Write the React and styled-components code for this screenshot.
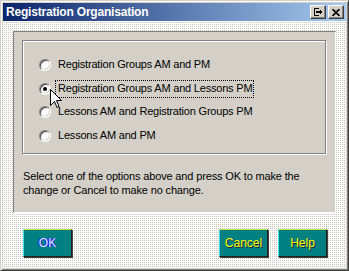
import styled, { createGlobalStyle } from 'styled-components';

const GlobalStyle = createGlobalStyle`
  html, body {
    margin: 0;
    padding: 0;
    background: #d4d0c8;
  }
  body {
    font-family: "Liberation Sans", Arial, sans-serif;
  }
`;

const Window = styled.div`
  position: relative;
  box-sizing: border-box;
  width: 349px;
  height: 271px;
  display: flex;
  flex-direction: column;
  padding: 2px;
  background: #d4d0c8;
  border: 1px solid;
  border-color: #d4d0c8 #404040 #404040 #d4d0c8;
  box-shadow: inset 1px 1px #fff, inset -1px -1px #808080;
`;

const TitleBar = styled.div`
  height: 18px;
  display: flex;
  align-items: center;
  padding: 0 2px 0 3px;
  background: linear-gradient(to right, #0a246a, #a6caf0);
`;

const Title = styled.span`
  flex: 1;
  color: #fff;
  font-weight: bold;
  font-size: 12px;
  letter-spacing: -0.2px;
`;

const CaptionButton = styled.button`
  box-sizing: border-box;
  width: 16px;
  height: 14px;
  padding: 0;
  margin-left: ${(p) => (p.$gap ? '2px' : '0')};
  display: flex;
  align-items: center;
  justify-content: center;
  background: #d4d0c8;
  border: 1px solid;
  border-color: #fff #404040 #404040 #fff;
  box-shadow: inset -1px -1px #808080;
`;

const Client = styled.div`
  flex: 1;
  display: flex;
  flex-direction: column;
  padding: 10px;
  background-color: #c8c4bc;
  background-image: linear-gradient(#fff 1px, transparent 1px),
    linear-gradient(90deg, #fff 1px, transparent 1px);
  background-size: 2px 2px;
`;

const Panel = styled.div`
  box-sizing: border-box;
  height: 182px;
  padding: 8px 8px 0 8px;
  background: #d4d0c8;
  border: 1px solid;
  border-color: #808080 #fff #fff #808080;
`;

const GroupBox = styled.div`
  position: relative;
  box-sizing: border-box;
  height: 115px;
  padding: 12px 0 0 16px;
  border: 1px solid #808080;
  border-right-color: #fff;
  border-bottom-color: #fff;
  box-shadow: inset 1px 1px #fff;
  &::after {
    content: '';
    position: absolute;
    inset: 0;
    border-right: 1px solid #808080;
    border-bottom: 1px solid #808080;
    pointer-events: none;
  }
`;

const Option = styled.label`
  height: 23.7px;
  display: flex;
  align-items: center;
  font-size: 11px;
  letter-spacing: -0.2px;
  color: #000;
`;

const Radio = styled.span`
  box-sizing: border-box;
  width: 12px;
  height: 12px;
  flex: none;
  border-radius: 50%;
  border: 1px solid;
  border-color: #808080 #fff #fff #808080;
  box-shadow: inset 1px 1px #404040, inset -1px -1px #d4d0c8;
  background: #fff;
  display: flex;
  align-items: center;
  justify-content: center;
  &::before {
    content: '';
    width: 4px;
    height: 4px;
    border-radius: 50%;
    background: ${(p) => (p.$checked ? '#000' : 'transparent')};
  }
`;

const OptionText = styled.span`
  margin-left: 4px;
  padding: 1px 1px 2px 2px;
  border: 1px dotted ${(p) => (p.$focus ? '#000' : 'transparent')};
  line-height: 13px;
`;

const Hint = styled.p`
  margin: 14px 0 0 1px;
  font-size: 11px;
  letter-spacing: -0.15px;
  line-height: 14px;
  color: #000;
`;

const ButtonRow = styled.div`
  display: flex;
  justify-content: space-between;
  margin-top: 16px;
  padding: 0 9px 0 10px;
`;

const RightButtons = styled.div`
  display: flex;
  gap: 10px;
`;

const TealButton = styled.button`
  box-sizing: border-box;
  width: 49px;
  height: 28px;
  padding: 0;
  background: #008080;
  border: 1px solid;
  border-color: #c8e040 #202020 #202020 #40e0f0;
  box-shadow: 1px 1px #404040;
  font-family: "Liberation Sans", Arial, sans-serif;
  font-size: 12px;
  color: ${(p) => (p.$blue ? '#dfe8ff' : '#ffff00')};
  text-shadow: ${(p) => (p.$blue ? '1px 0 #2020ff, -1px 0 #2020ff' : '1px 1px #202040')};
`;

const Cursor = styled.svg`
  position: absolute;
  left: 49px;
  top: 88px;
  pointer-events: none;
`;

const options = [
  'Registration Groups AM and PM',
  'Registration Groups AM and Lessons PM',
  'Lessons AM and Registration Groups PM',
  'Lessons AM and PM',
];

export default function App() {
  return (
    <Window>
      <GlobalStyle />
      <TitleBar>
        <Title>Registration Organisation</Title>
        <CaptionButton>
          <svg width="9" height="8" viewBox="0 0 9 8" shapeRendering="crispEdges">
            <path d="M5 0.5H0.5V7.5H5" fill="none" stroke="#000" />
            <path d="M2 3.5H6 M2 4.5H6" stroke="#000" />
            <path d="M6 1.5L9 4L6 6.5Z" fill="#000" />
          </svg>
        </CaptionButton>
        <CaptionButton $gap>
          <svg width="8" height="7" viewBox="0 0 8 7">
            <path d="M0.5 0L7.5 7 M7.5 0L0.5 7" stroke="#000" strokeWidth="1.6" />
          </svg>
        </CaptionButton>
      </TitleBar>
      <Client>
        <Panel>
          <GroupBox>
            {options.map((o, i) => (
              <Option key={o}>
                <Radio $checked={i === 1} />
                <OptionText $focus={i === 1}>{o}</OptionText>
              </Option>
            ))}
          </GroupBox>
          <Hint>
            Select one of the options above and press OK to make the
            <br />
            change or Cancel to make no change.
          </Hint>
        </Panel>
        <ButtonRow>
          <TealButton $blue>OK</TealButton>
          <RightButtons>
            <TealButton>Cancel</TealButton>
            <TealButton>Help</TealButton>
          </RightButtons>
        </ButtonRow>
      </Client>
      <Cursor width="12" height="20" viewBox="0 0 12 20">
        <path
          d="M0.5 0.5V16.5L4.5 12.5L7 18.5L9 17.5L6.5 11.5H11.5Z"
          fill="#fff"
          stroke="#000"
          strokeWidth="1"
        />
      </Cursor>
    </Window>
  );
}
